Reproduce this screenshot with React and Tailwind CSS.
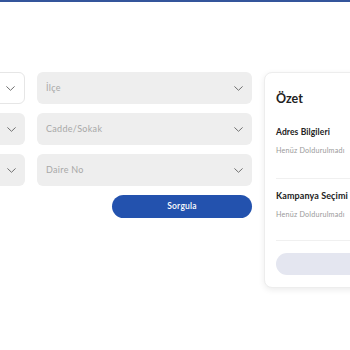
import React from "react";

function Chevron() {
  return (
    <svg width="9" height="5" viewBox="0 0 9 5" fill="none">
      <path d="M0.7 0.7l3.8 3.6 3.8-3.6" stroke="#707070" strokeWidth="1" strokeLinecap="round" strokeLinejoin="round" />
    </svg>
  );
}

function Select({ label, white }) {
  return (
    <div
      className={
        "h-[32px] rounded-[6px] flex items-center justify-between pl-[9px] pr-[9px] " +
        (white ? "bg-white border border-[#e6e6e6]" : "bg-[#eeeeee]")
      }
    >
      <span className="text-[9px] text-[#a8a8a8] tracking-[0.3px]">{label}</span>
      <Chevron />
    </div>
  );
}

export default function App() {
  return (
    <div className="w-[350px] h-[350px] overflow-hidden bg-white" style={{ fontFamily: "Lato, 'Noto Sans', sans-serif" }}>
      <div className="h-[2px] bg-[#34559b]" />
      <div className="flex gap-[12px] ml-[-190px] mt-[70px] items-start">
        <div className="w-[215px] shrink-0 flex flex-col gap-[9px]">
          <Select label="" white />
          <Select label="" />
          <Select label="" />
        </div>
        <div className="w-[215px] shrink-0 flex flex-col gap-[9px]">
          <Select label="İlçe" />
          <Select label="Cadde/Sokak" />
          <Select label="Daire No" />
          <div className="flex justify-end">
            <button className="w-[140px] h-[23px] rounded-full bg-[#2352ae] text-white text-[8.5px] font-semibold tracking-[0.2px]">
              Sorgula
            </button>
          </div>
        </div>
        <div className="w-[215px] shrink-0 rounded-[8px] border border-[#ededed] bg-white shadow-[0_2px_6px_rgba(0,0,0,0.08)] px-[11px] pt-[18px] pb-[12px]">
          <div className="text-[12.5px] leading-[16px] font-bold text-[#222]">Özet</div>
          <div className="mt-[19px] text-[8.5px] leading-[12px] font-bold text-[#222] tracking-[0.1px]">Adres Bilgileri</div>
          <div className="mt-[8px] text-[7.2px] leading-[10px] text-[#9a9a9a] tracking-[0.2px]">Henüz Doldurulmadı</div>
          <div className="mt-[22px] h-px bg-[#f0f0f0]" />
          <div className="mt-[11px] text-[9px] leading-[12px] font-bold text-[#222] tracking-[0.1px]">Kampanya Seçimi</div>
          <div className="mt-[8px] text-[7.2px] leading-[10px] text-[#9a9a9a] tracking-[0.2px]">Henüz Doldurulmadı</div>
          <div className="mt-[20px] h-px bg-[#f0f0f0]" />
          <div className="mt-[12px] h-[22px] rounded-full bg-[#e4e6f0]" />
        </div>
      </div>
    </div>
  );
}
